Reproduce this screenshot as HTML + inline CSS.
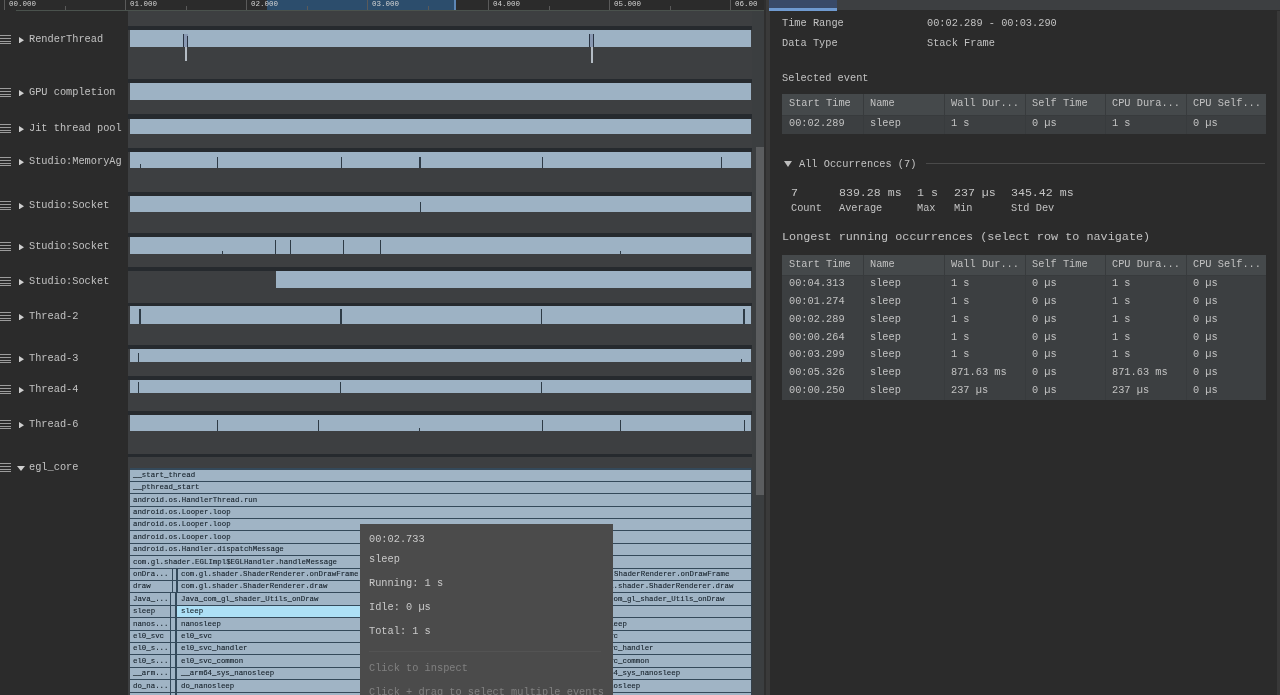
<!DOCTYPE html>
<html><head><meta charset="utf-8"><style>
html,body{margin:0;padding:0;width:1280px;height:695px;overflow:hidden;background:#2b2b2b}
#r{position:relative;width:1280px;height:695px;overflow:hidden}
#r div,#r svg{position:absolute}
.t{white-space:pre;will-change:transform;font-family:"Liberation Mono",monospace}
</style></head><body><div id="r">
<div style="left:0px;top:0px;width:1280px;height:695px;background:#2b2b2b;"></div>
<div style="left:128px;top:11px;width:624px;height:684px;background:#3d3f41;"></div>
<div style="left:752px;top:11px;width:12px;height:684px;background:#3b3e40;"></div>
<div style="left:756px;top:147px;width:8px;height:348px;background:#5b5d5f;"></div>
<div style="left:764px;top:0px;width:2px;height:695px;background:#2f2f2f;"></div>
<div style="left:766px;top:0px;width:4px;height:695px;background:#3a3a3a;"></div>
<div style="left:0px;top:0px;width:764px;height:10px;background:#2b2b2b;"></div>
<div style="left:267px;top:0px;width:188px;height:10px;background:#2c4d6c;"></div>
<div style="left:454px;top:0px;width:2px;height:10px;background:#5d86b5;"></div>
<div style="left:16px;top:10px;width:748px;height:1px;background:#4a524d;"></div>
<div style="left:4.3px;top:0px;width:1px;height:10px;background:#5a5a5a;"></div>
<div style="left:65px;top:6px;width:1px;height:4px;background:#5a5a5a;"></div>
<div style="left:125.3px;top:0px;width:1px;height:10px;background:#5a5a5a;"></div>
<div style="left:186px;top:6px;width:1px;height:4px;background:#5a5a5a;"></div>
<div style="left:246.3px;top:0px;width:1px;height:10px;background:#5a5a5a;"></div>
<div style="left:307px;top:6px;width:1px;height:4px;background:#5a5a5a;"></div>
<div style="left:367.3px;top:0px;width:1px;height:10px;background:#5a5a5a;"></div>
<div style="left:428px;top:6px;width:1px;height:4px;background:#5a5a5a;"></div>
<div style="left:488.3px;top:0px;width:1px;height:10px;background:#5a5a5a;"></div>
<div style="left:549px;top:6px;width:1px;height:4px;background:#5a5a5a;"></div>
<div style="left:609.3px;top:0px;width:1px;height:10px;background:#5a5a5a;"></div>
<div style="left:670px;top:6px;width:1px;height:4px;background:#5a5a5a;"></div>
<div style="left:730.3px;top:0px;width:1px;height:10px;background:#5a5a5a;"></div>
<div class="t" style="left:8.8px;top:0.96px;font-size:7.5px;line-height:7.5px;color:#d2d2d2;">00.000</div>
<div class="t" style="left:129.8px;top:0.96px;font-size:7.5px;line-height:7.5px;color:#d2d2d2;">01.000</div>
<div class="t" style="left:250.8px;top:0.96px;font-size:7.5px;line-height:7.5px;color:#d2d2d2;">02.000</div>
<div class="t" style="left:371.8px;top:0.96px;font-size:7.5px;line-height:7.5px;color:#d2d2d2;">03.000</div>
<div class="t" style="left:492.8px;top:0.96px;font-size:7.5px;line-height:7.5px;color:#d2d2d2;">04.000</div>
<div class="t" style="left:613.8px;top:0.96px;font-size:7.5px;line-height:7.5px;color:#d2d2d2;">05.000</div>
<div style="left:0;top:0;width:757px;height:10px;overflow:hidden">
<div class="t" style="left:734.8px;top:0.96px;font-size:7.5px;line-height:7.5px;color:#d2d2d2;">06.000</div>
</div>
<div style="left:128px;top:26px;width:624px;height:4px;background:#262a2e;"></div>
<div style="left:130px;top:30px;width:621px;height:17px;background:#9db2c4;"></div>
<div style="left:0px;top:35.3px;width:11px;height:1px;background:#9c9c9c;"></div>
<div style="left:0px;top:38.3px;width:11px;height:1px;background:#9c9c9c;"></div>
<div style="left:0px;top:41.3px;width:11px;height:1px;background:#9c9c9c;"></div>
<div style="left:0px;top:43.3px;width:11px;height:1px;background:#9c9c9c;"></div>
<svg style="left:19.2px;top:37.0px" width="5" height="6.4" viewBox="0 0 5 6.4"><path d="M0 0L5 3.2L0 6.4Z" fill="#cfcfcf"/></svg>
<div class="t" style="left:29px;top:34.11px;font-size:10.3px;line-height:10.3px;color:#c2c2c2;">RenderThread</div>
<div style="left:128px;top:79px;width:624px;height:4px;background:#262a2e;"></div>
<div style="left:130px;top:83px;width:621px;height:17px;background:#9db2c4;"></div>
<div style="left:0px;top:88.3px;width:11px;height:1px;background:#9c9c9c;"></div>
<div style="left:0px;top:91.3px;width:11px;height:1px;background:#9c9c9c;"></div>
<div style="left:0px;top:94.3px;width:11px;height:1px;background:#9c9c9c;"></div>
<div style="left:0px;top:96.3px;width:11px;height:1px;background:#9c9c9c;"></div>
<svg style="left:19.2px;top:90.0px" width="5" height="6.4" viewBox="0 0 5 6.4"><path d="M0 0L5 3.2L0 6.4Z" fill="#cfcfcf"/></svg>
<div class="t" style="left:29px;top:87.11px;font-size:10.3px;line-height:10.3px;color:#c2c2c2;">GPU completion</div>
<div style="left:128px;top:114px;width:624px;height:5px;background:#262a2e;"></div>
<div style="left:130px;top:119px;width:621px;height:15px;background:#9db2c4;"></div>
<div style="left:0px;top:124.3px;width:11px;height:1px;background:#9c9c9c;"></div>
<div style="left:0px;top:127.3px;width:11px;height:1px;background:#9c9c9c;"></div>
<div style="left:0px;top:130.3px;width:11px;height:1px;background:#9c9c9c;"></div>
<div style="left:0px;top:132.3px;width:11px;height:1px;background:#9c9c9c;"></div>
<svg style="left:19.2px;top:126.0px" width="5" height="6.4" viewBox="0 0 5 6.4"><path d="M0 0L5 3.2L0 6.4Z" fill="#cfcfcf"/></svg>
<div class="t" style="left:29px;top:123.11px;font-size:10.3px;line-height:10.3px;color:#c2c2c2;">Jit thread pool</div>
<div style="left:128px;top:148px;width:624px;height:4px;background:#262a2e;"></div>
<div style="left:130px;top:152px;width:621px;height:16px;background:#9db2c4;"></div>
<div style="left:0px;top:157.3px;width:11px;height:1px;background:#9c9c9c;"></div>
<div style="left:0px;top:160.3px;width:11px;height:1px;background:#9c9c9c;"></div>
<div style="left:0px;top:163.3px;width:11px;height:1px;background:#9c9c9c;"></div>
<div style="left:0px;top:165.3px;width:11px;height:1px;background:#9c9c9c;"></div>
<svg style="left:19.2px;top:159.0px" width="5" height="6.4" viewBox="0 0 5 6.4"><path d="M0 0L5 3.2L0 6.4Z" fill="#cfcfcf"/></svg>
<div class="t" style="left:29px;top:156.11px;font-size:10.3px;line-height:10.3px;color:#c2c2c2;">Studio:MemoryAg</div>
<div style="left:128px;top:192px;width:624px;height:4px;background:#262a2e;"></div>
<div style="left:130px;top:196px;width:621px;height:16px;background:#9db2c4;"></div>
<div style="left:0px;top:201.3px;width:11px;height:1px;background:#9c9c9c;"></div>
<div style="left:0px;top:204.3px;width:11px;height:1px;background:#9c9c9c;"></div>
<div style="left:0px;top:207.3px;width:11px;height:1px;background:#9c9c9c;"></div>
<div style="left:0px;top:209.3px;width:11px;height:1px;background:#9c9c9c;"></div>
<svg style="left:19.2px;top:203.0px" width="5" height="6.4" viewBox="0 0 5 6.4"><path d="M0 0L5 3.2L0 6.4Z" fill="#cfcfcf"/></svg>
<div class="t" style="left:29px;top:200.11px;font-size:10.3px;line-height:10.3px;color:#c2c2c2;">Studio:Socket</div>
<div style="left:128px;top:233px;width:624px;height:4px;background:#262a2e;"></div>
<div style="left:130px;top:237px;width:621px;height:17px;background:#9db2c4;"></div>
<div style="left:0px;top:242.3px;width:11px;height:1px;background:#9c9c9c;"></div>
<div style="left:0px;top:245.3px;width:11px;height:1px;background:#9c9c9c;"></div>
<div style="left:0px;top:248.3px;width:11px;height:1px;background:#9c9c9c;"></div>
<div style="left:0px;top:250.3px;width:11px;height:1px;background:#9c9c9c;"></div>
<svg style="left:19.2px;top:244.0px" width="5" height="6.4" viewBox="0 0 5 6.4"><path d="M0 0L5 3.2L0 6.4Z" fill="#cfcfcf"/></svg>
<div class="t" style="left:29px;top:241.11px;font-size:10.3px;line-height:10.3px;color:#c2c2c2;">Studio:Socket</div>
<div style="left:128px;top:267px;width:624px;height:4px;background:#262a2e;"></div>
<div style="left:276px;top:271px;width:475px;height:17px;background:#9db2c4;"></div>
<div style="left:0px;top:277.3px;width:11px;height:1px;background:#9c9c9c;"></div>
<div style="left:0px;top:280.3px;width:11px;height:1px;background:#9c9c9c;"></div>
<div style="left:0px;top:283.3px;width:11px;height:1px;background:#9c9c9c;"></div>
<div style="left:0px;top:285.3px;width:11px;height:1px;background:#9c9c9c;"></div>
<svg style="left:19.2px;top:279.0px" width="5" height="6.4" viewBox="0 0 5 6.4"><path d="M0 0L5 3.2L0 6.4Z" fill="#cfcfcf"/></svg>
<div class="t" style="left:29px;top:276.11px;font-size:10.3px;line-height:10.3px;color:#c2c2c2;">Studio:Socket</div>
<div style="left:128px;top:303px;width:624px;height:3px;background:#262a2e;"></div>
<div style="left:130px;top:306px;width:621px;height:18px;background:#9db2c4;"></div>
<div style="left:0px;top:312.3px;width:11px;height:1px;background:#9c9c9c;"></div>
<div style="left:0px;top:315.3px;width:11px;height:1px;background:#9c9c9c;"></div>
<div style="left:0px;top:318.3px;width:11px;height:1px;background:#9c9c9c;"></div>
<div style="left:0px;top:320.3px;width:11px;height:1px;background:#9c9c9c;"></div>
<svg style="left:19.2px;top:314.0px" width="5" height="6.4" viewBox="0 0 5 6.4"><path d="M0 0L5 3.2L0 6.4Z" fill="#cfcfcf"/></svg>
<div class="t" style="left:29px;top:311.11px;font-size:10.3px;line-height:10.3px;color:#c2c2c2;">Thread-2</div>
<div style="left:128px;top:345px;width:624px;height:4px;background:#262a2e;"></div>
<div style="left:130px;top:349px;width:621px;height:13px;background:#9db2c4;"></div>
<div style="left:0px;top:354.3px;width:11px;height:1px;background:#9c9c9c;"></div>
<div style="left:0px;top:357.3px;width:11px;height:1px;background:#9c9c9c;"></div>
<div style="left:0px;top:360.3px;width:11px;height:1px;background:#9c9c9c;"></div>
<div style="left:0px;top:362.3px;width:11px;height:1px;background:#9c9c9c;"></div>
<svg style="left:19.2px;top:356.0px" width="5" height="6.4" viewBox="0 0 5 6.4"><path d="M0 0L5 3.2L0 6.4Z" fill="#cfcfcf"/></svg>
<div class="t" style="left:29px;top:353.11px;font-size:10.3px;line-height:10.3px;color:#c2c2c2;">Thread-3</div>
<div style="left:128px;top:376px;width:624px;height:4px;background:#262a2e;"></div>
<div style="left:130px;top:380px;width:621px;height:13px;background:#9db2c4;"></div>
<div style="left:0px;top:385.3px;width:11px;height:1px;background:#9c9c9c;"></div>
<div style="left:0px;top:388.3px;width:11px;height:1px;background:#9c9c9c;"></div>
<div style="left:0px;top:391.3px;width:11px;height:1px;background:#9c9c9c;"></div>
<div style="left:0px;top:393.3px;width:11px;height:1px;background:#9c9c9c;"></div>
<svg style="left:19.2px;top:387.0px" width="5" height="6.4" viewBox="0 0 5 6.4"><path d="M0 0L5 3.2L0 6.4Z" fill="#cfcfcf"/></svg>
<div class="t" style="left:29px;top:384.11px;font-size:10.3px;line-height:10.3px;color:#c2c2c2;">Thread-4</div>
<div style="left:128px;top:411px;width:624px;height:4px;background:#262a2e;"></div>
<div style="left:130px;top:415px;width:621px;height:16px;background:#9db2c4;"></div>
<div style="left:0px;top:420.3px;width:11px;height:1px;background:#9c9c9c;"></div>
<div style="left:0px;top:423.3px;width:11px;height:1px;background:#9c9c9c;"></div>
<div style="left:0px;top:426.3px;width:11px;height:1px;background:#9c9c9c;"></div>
<div style="left:0px;top:428.3px;width:11px;height:1px;background:#9c9c9c;"></div>
<svg style="left:19.2px;top:422.0px" width="5" height="6.4" viewBox="0 0 5 6.4"><path d="M0 0L5 3.2L0 6.4Z" fill="#cfcfcf"/></svg>
<div class="t" style="left:29px;top:419.11px;font-size:10.3px;line-height:10.3px;color:#c2c2c2;">Thread-6</div>
<div style="left:128px;top:454px;width:624px;height:3px;background:#262a2e;"></div>
<div style="left:0px;top:463.3px;width:11px;height:1px;background:#9c9c9c;"></div>
<div style="left:0px;top:466.3px;width:11px;height:1px;background:#9c9c9c;"></div>
<div style="left:0px;top:469.3px;width:11px;height:1px;background:#9c9c9c;"></div>
<div style="left:0px;top:471.3px;width:11px;height:1px;background:#9c9c9c;"></div>
<svg style="left:17px;top:466.4px" width="8" height="6" viewBox="0 0 8 6"><path d="M0 0L8 0L4 5Z" fill="#cfcfcf"/></svg>
<div class="t" style="left:29px;top:462.11px;font-size:10.3px;line-height:10.3px;color:#c2c2c2;">egl_core</div>
<div style="left:140px;top:164px;width:1px;height:4px;background:#2e3b46;"></div>
<div style="left:216.5px;top:157px;width:1px;height:11px;background:#2e3b46;"></div>
<div style="left:341px;top:157px;width:1px;height:11px;background:#2e3b46;"></div>
<div style="left:418.5px;top:157px;width:2px;height:11px;background:#2e3b46;"></div>
<div style="left:541.5px;top:157px;width:1px;height:11px;background:#2e3b46;"></div>
<div style="left:721px;top:157px;width:1px;height:11px;background:#2e3b46;"></div>
<div style="left:420px;top:202px;width:1px;height:10px;background:#2e3b46;"></div>
<div style="left:221.5px;top:251px;width:1px;height:3px;background:#2e3b46;"></div>
<div style="left:275px;top:240px;width:1px;height:14px;background:#2e3b46;"></div>
<div style="left:289.5px;top:240px;width:1px;height:14px;background:#2e3b46;"></div>
<div style="left:342.5px;top:240px;width:1px;height:14px;background:#2e3b46;"></div>
<div style="left:380px;top:240px;width:1px;height:14px;background:#2e3b46;"></div>
<div style="left:620px;top:251px;width:1px;height:3px;background:#2e3b46;"></div>
<div style="left:138.5px;top:309px;width:2px;height:15px;background:#2e3b46;"></div>
<div style="left:340px;top:309px;width:2px;height:15px;background:#2e3b46;"></div>
<div style="left:541px;top:309px;width:1px;height:15px;background:#2e3b46;"></div>
<div style="left:743px;top:309px;width:2px;height:15px;background:#2e3b46;"></div>
<div style="left:138px;top:353px;width:1px;height:9px;background:#2e3b46;"></div>
<div style="left:741px;top:359px;width:1px;height:3px;background:#2e3b46;"></div>
<div style="left:138.2px;top:382px;width:1px;height:11px;background:#2e3b46;"></div>
<div style="left:340px;top:382px;width:1px;height:11px;background:#2e3b46;"></div>
<div style="left:540.5px;top:382px;width:1px;height:11px;background:#2e3b46;"></div>
<div style="left:216.5px;top:420px;width:1px;height:11px;background:#2e3b46;"></div>
<div style="left:318px;top:420px;width:1px;height:11px;background:#2e3b46;"></div>
<div style="left:419px;top:428px;width:1px;height:3px;background:#2e3b46;"></div>
<div style="left:541.5px;top:420px;width:1px;height:11px;background:#2e3b46;"></div>
<div style="left:619.5px;top:420px;width:1px;height:11px;background:#2e3b46;"></div>
<div style="left:744px;top:420px;width:1px;height:11px;background:#2e3b46;"></div>
<div style="left:183px;top:34px;width:4.5px;height:13px;background:#8898b2;"></div>
<div style="left:183px;top:34px;width:1px;height:13px;background:#2a3444;"></div>
<div style="left:186.5px;top:36px;width:1px;height:11px;background:#2a3444;"></div>
<div style="left:184.5px;top:47px;width:2px;height:14px;background:#b4bcc4;"></div>
<div style="left:589px;top:34px;width:5px;height:13px;background:#8898b2;"></div>
<div style="left:589px;top:34px;width:1px;height:13px;background:#2a3444;"></div>
<div style="left:593px;top:34px;width:1px;height:13px;background:#2a3444;"></div>
<div style="left:590.5px;top:47px;width:2px;height:16px;background:#b4bcc4;"></div>
<div style="left:130px;top:469.0px;width:621px;height:226.0px;background:#a0b4c5;"></div>
<div style="left:130px;top:468px;width:621px;height:2px;background:#34495a;"></div>
<div style="left:751px;top:468px;width:1px;height:227px;background:#34404a;"></div>
<div style="left:130px;top:468.40px;width:621px;height:1px;background:#34495a;"></div>
<div style="left:130px;top:480.80px;width:621px;height:1px;background:#34495a;"></div>
<div style="left:130px;top:493.20px;width:621px;height:1px;background:#34495a;"></div>
<div style="left:130px;top:505.60px;width:621px;height:1px;background:#34495a;"></div>
<div style="left:130px;top:518.00px;width:621px;height:1px;background:#34495a;"></div>
<div style="left:130px;top:530.40px;width:621px;height:1px;background:#34495a;"></div>
<div style="left:130px;top:542.80px;width:621px;height:1px;background:#34495a;"></div>
<div style="left:130px;top:555.20px;width:621px;height:1px;background:#34495a;"></div>
<div style="left:130px;top:567.60px;width:621px;height:1px;background:#34495a;"></div>
<div style="left:130px;top:580.00px;width:621px;height:1px;background:#34495a;"></div>
<div style="left:130px;top:592.40px;width:621px;height:1px;background:#34495a;"></div>
<div style="left:130px;top:604.80px;width:621px;height:1px;background:#34495a;"></div>
<div style="left:130px;top:617.20px;width:621px;height:1px;background:#34495a;"></div>
<div style="left:130px;top:629.60px;width:621px;height:1px;background:#34495a;"></div>
<div style="left:130px;top:642.00px;width:621px;height:1px;background:#34495a;"></div>
<div style="left:130px;top:654.40px;width:621px;height:1px;background:#34495a;"></div>
<div style="left:130px;top:666.80px;width:621px;height:1px;background:#34495a;"></div>
<div style="left:130px;top:679.20px;width:621px;height:1px;background:#34495a;"></div>
<div style="left:130px;top:691.60px;width:621px;height:1px;background:#34495a;"></div>
<div class="t" style="left:132.5px;top:471.83px;font-size:7.4px;line-height:7.4px;color:#131e27;-webkit-text-stroke:0.1px #131e27;">__start_thread</div>
<div class="t" style="left:132.5px;top:484.23px;font-size:7.4px;line-height:7.4px;color:#131e27;-webkit-text-stroke:0.1px #131e27;">__pthread_start</div>
<div class="t" style="left:132.5px;top:496.63px;font-size:7.4px;line-height:7.4px;color:#131e27;-webkit-text-stroke:0.1px #131e27;">android.os.HandlerThread.run</div>
<div class="t" style="left:132.5px;top:509.03px;font-size:7.4px;line-height:7.4px;color:#131e27;-webkit-text-stroke:0.1px #131e27;">android.os.Looper.loop</div>
<div class="t" style="left:132.5px;top:521.43px;font-size:7.4px;line-height:7.4px;color:#131e27;-webkit-text-stroke:0.1px #131e27;">android.os.Looper.loop</div>
<div class="t" style="left:132.5px;top:533.83px;font-size:7.4px;line-height:7.4px;color:#131e27;-webkit-text-stroke:0.1px #131e27;">android.os.Looper.loop</div>
<div class="t" style="left:132.5px;top:546.23px;font-size:7.4px;line-height:7.4px;color:#131e27;-webkit-text-stroke:0.1px #131e27;">android.os.Handler.dispatchMessage</div>
<div class="t" style="left:132.5px;top:558.63px;font-size:7.4px;line-height:7.4px;color:#131e27;-webkit-text-stroke:0.1px #131e27;">com.gl.shader.EGLImpl$EGLHandler.handleMessage</div>
<div style="left:172px;top:568.20px;width:1px;height:12.4px;background:#34495a;"></div>
<div style="left:176px;top:568.20px;width:1.5px;height:12.4px;background:#34495a;"></div>
<div class="t" style="left:132.5px;top:571.03px;font-size:7.4px;line-height:7.4px;color:#131e27;-webkit-text-stroke:0.1px #131e27;">onDra...</div>
<div class="t" style="left:181px;top:571.03px;font-size:7.4px;line-height:7.4px;color:#131e27;-webkit-text-stroke:0.1px #131e27;">com.gl.shader.ShaderRenderer.onDrawFrame</div>
<div class="t" style="left:552px;top:571.03px;font-size:7.4px;line-height:7.4px;color:#131e27;-webkit-text-stroke:0.1px #131e27;">com.gl.shader.ShaderRenderer.onDrawFrame</div>
<div style="left:172px;top:580.60px;width:1px;height:12.4px;background:#34495a;"></div>
<div style="left:176px;top:580.60px;width:1.5px;height:12.4px;background:#34495a;"></div>
<div class="t" style="left:132.5px;top:583.43px;font-size:7.4px;line-height:7.4px;color:#131e27;-webkit-text-stroke:0.1px #131e27;">draw</div>
<div class="t" style="left:181px;top:583.43px;font-size:7.4px;line-height:7.4px;color:#131e27;-webkit-text-stroke:0.1px #131e27;">com.gl.shader.ShaderRenderer.draw</div>
<div class="t" style="left:587px;top:583.43px;font-size:7.4px;line-height:7.4px;color:#131e27;-webkit-text-stroke:0.1px #131e27;">com.gl.shader.ShaderRenderer.draw</div>
<div style="left:170px;top:593.00px;width:1px;height:12.4px;background:#34495a;"></div>
<div style="left:175px;top:593.00px;width:2px;height:12.4px;background:#34495a;"></div>
<div class="t" style="left:132.5px;top:595.83px;font-size:7.4px;line-height:7.4px;color:#131e27;-webkit-text-stroke:0.1px #131e27;">Java_...</div>
<div class="t" style="left:181px;top:595.83px;font-size:7.4px;line-height:7.4px;color:#131e27;-webkit-text-stroke:0.1px #131e27;">Java_com_gl_shader_Utils_onDraw</div>
<div class="t" style="left:587px;top:595.83px;font-size:7.4px;line-height:7.4px;color:#131e27;-webkit-text-stroke:0.1px #131e27;">Java_com_gl_shader_Utils_onDraw</div>
<div style="left:170px;top:605.40px;width:1px;height:12.4px;background:#34495a;"></div>
<div style="left:175px;top:605.40px;width:2px;height:12.4px;background:#34495a;"></div>
<div class="t" style="left:132.5px;top:608.23px;font-size:7.4px;line-height:7.4px;color:#131e27;-webkit-text-stroke:0.1px #131e27;">sleep</div>
<div style="left:177px;top:605.90px;width:420px;height:11.4px;background:#ade0f6;"></div>
<div class="t" style="left:181px;top:608.23px;font-size:7.4px;line-height:7.4px;color:#131e27;-webkit-text-stroke:0.1px #131e27;">sleep</div>
<div style="left:170px;top:617.80px;width:1px;height:12.4px;background:#34495a;"></div>
<div style="left:175px;top:617.80px;width:2px;height:12.4px;background:#34495a;"></div>
<div class="t" style="left:132.5px;top:620.63px;font-size:7.4px;line-height:7.4px;color:#131e27;-webkit-text-stroke:0.1px #131e27;">nanos...</div>
<div class="t" style="left:181px;top:620.63px;font-size:7.4px;line-height:7.4px;color:#131e27;-webkit-text-stroke:0.1px #131e27;">nanosleep</div>
<div class="t" style="left:587px;top:620.63px;font-size:7.4px;line-height:7.4px;color:#131e27;-webkit-text-stroke:0.1px #131e27;">nanosleep</div>
<div style="left:170px;top:630.20px;width:1px;height:12.4px;background:#34495a;"></div>
<div style="left:175px;top:630.20px;width:2px;height:12.4px;background:#34495a;"></div>
<div class="t" style="left:132.5px;top:633.03px;font-size:7.4px;line-height:7.4px;color:#131e27;-webkit-text-stroke:0.1px #131e27;">el0_svc</div>
<div class="t" style="left:181px;top:633.03px;font-size:7.4px;line-height:7.4px;color:#131e27;-webkit-text-stroke:0.1px #131e27;">el0_svc</div>
<div class="t" style="left:587px;top:633.03px;font-size:7.4px;line-height:7.4px;color:#131e27;-webkit-text-stroke:0.1px #131e27;">el0_svc</div>
<div style="left:170px;top:642.60px;width:1px;height:12.4px;background:#34495a;"></div>
<div style="left:175px;top:642.60px;width:2px;height:12.4px;background:#34495a;"></div>
<div class="t" style="left:132.5px;top:645.43px;font-size:7.4px;line-height:7.4px;color:#131e27;-webkit-text-stroke:0.1px #131e27;">el0_s...</div>
<div class="t" style="left:181px;top:645.43px;font-size:7.4px;line-height:7.4px;color:#131e27;-webkit-text-stroke:0.1px #131e27;">el0_svc_handler</div>
<div class="t" style="left:587px;top:645.43px;font-size:7.4px;line-height:7.4px;color:#131e27;-webkit-text-stroke:0.1px #131e27;">el0_svc_handler</div>
<div style="left:170px;top:655.00px;width:1px;height:12.4px;background:#34495a;"></div>
<div style="left:175px;top:655.00px;width:2px;height:12.4px;background:#34495a;"></div>
<div class="t" style="left:132.5px;top:657.83px;font-size:7.4px;line-height:7.4px;color:#131e27;-webkit-text-stroke:0.1px #131e27;">el0_s...</div>
<div class="t" style="left:181px;top:657.83px;font-size:7.4px;line-height:7.4px;color:#131e27;-webkit-text-stroke:0.1px #131e27;">el0_svc_common</div>
<div class="t" style="left:587px;top:657.83px;font-size:7.4px;line-height:7.4px;color:#131e27;-webkit-text-stroke:0.1px #131e27;">el0_svc_common</div>
<div style="left:170px;top:667.40px;width:1px;height:12.4px;background:#34495a;"></div>
<div style="left:175px;top:667.40px;width:2px;height:12.4px;background:#34495a;"></div>
<div class="t" style="left:132.5px;top:670.23px;font-size:7.4px;line-height:7.4px;color:#131e27;-webkit-text-stroke:0.1px #131e27;">__arm...</div>
<div class="t" style="left:181px;top:670.23px;font-size:7.4px;line-height:7.4px;color:#131e27;-webkit-text-stroke:0.1px #131e27;">__arm64_sys_nanosleep</div>
<div class="t" style="left:587px;top:670.23px;font-size:7.4px;line-height:7.4px;color:#131e27;-webkit-text-stroke:0.1px #131e27;">__arm64_sys_nanosleep</div>
<div style="left:170px;top:679.80px;width:1px;height:12.4px;background:#34495a;"></div>
<div style="left:175px;top:679.80px;width:2px;height:12.4px;background:#34495a;"></div>
<div class="t" style="left:132.5px;top:682.63px;font-size:7.4px;line-height:7.4px;color:#131e27;-webkit-text-stroke:0.1px #131e27;">do_na...</div>
<div class="t" style="left:181px;top:682.63px;font-size:7.4px;line-height:7.4px;color:#131e27;-webkit-text-stroke:0.1px #131e27;">do_nanosleep</div>
<div class="t" style="left:587px;top:682.63px;font-size:7.4px;line-height:7.4px;color:#131e27;-webkit-text-stroke:0.1px #131e27;">do_nanosleep</div>
<div style="left:170px;top:692.20px;width:1px;height:12.4px;background:#34495a;"></div>
<div style="left:175px;top:692.20px;width:2px;height:12.4px;background:#34495a;"></div>
<div style="left:360px;top:524px;width:253px;height:172px;background:#4b4b4b;"></div>
<div class="t" style="left:368.8px;top:534.11px;font-size:10.3px;line-height:10.3px;color:#c9c9c9;">00:02.733</div>
<div class="t" style="left:368.8px;top:554.11px;font-size:10.3px;line-height:10.3px;color:#c9c9c9;">sleep</div>
<div class="t" style="left:368.8px;top:578.11px;font-size:10.3px;line-height:10.3px;color:#c9c9c9;">Running: 1 s</div>
<div class="t" style="left:368.8px;top:602.11px;font-size:10.3px;line-height:10.3px;color:#c9c9c9;">Idle: 0 µs</div>
<div class="t" style="left:368.8px;top:626.11px;font-size:10.3px;line-height:10.3px;color:#c9c9c9;">Total: 1 s</div>
<div style="left:369px;top:651px;width:232px;height:1px;background:#535353;"></div>
<div class="t" style="left:368.8px;top:663.11px;font-size:10.3px;line-height:10.3px;color:#808080;">Click to inspect</div>
<div class="t" style="left:368.8px;top:686.61px;font-size:10.3px;line-height:10.3px;color:#808080;">Click + drag to select multiple events</div>
<div style="left:1277px;top:11px;width:3px;height:684px;background:#383838;"></div>
<div style="left:770px;top:0px;width:510px;height:10px;background:#3d3f41;"></div>
<div style="left:769px;top:0px;width:68px;height:8px;background:#394a68;"></div>
<div style="left:769px;top:8px;width:68px;height:3px;background:#6f9ad0;"></div>
<div class="t" style="left:781.5px;top:18.11px;font-size:10.3px;line-height:10.3px;color:#c2c2c2;">Time Range</div>
<div class="t" style="left:927px;top:18.11px;font-size:10.3px;line-height:10.3px;color:#c2c2c2;">00:02.289 - 00:03.290</div>
<div class="t" style="left:781.5px;top:38.41px;font-size:10.3px;line-height:10.3px;color:#c2c2c2;">Data Type</div>
<div class="t" style="left:927px;top:38.41px;font-size:10.3px;line-height:10.3px;color:#c2c2c2;">Stack Frame</div>
<div class="t" style="left:781.5px;top:73.11px;font-size:10.3px;line-height:10.3px;color:#c2c2c2;">Selected event</div>
<div style="left:782px;top:94px;width:484px;height:21px;background:#45494b;"></div>
<div style="left:782px;top:115px;width:484px;height:19px;background:#3c3f41;"></div>
<div style="left:862.85px;top:94px;width:1px;height:40px;background:#383b3d;"></div>
<div style="left:943.7px;top:94px;width:1px;height:40px;background:#383b3d;"></div>
<div style="left:1024.55px;top:94px;width:1px;height:40px;background:#383b3d;"></div>
<div style="left:1105.4px;top:94px;width:1px;height:40px;background:#383b3d;"></div>
<div style="left:1186.25px;top:94px;width:1px;height:40px;background:#383b3d;"></div>
<div style="left:782px;top:115px;width:484px;height:1px;background:#383b3d;"></div>
<div class="t" style="left:789.0px;top:98.11px;font-size:10.3px;line-height:10.3px;color:#c2c2c2;">Start Time</div>
<div class="t" style="left:869.85px;top:98.11px;font-size:10.3px;line-height:10.3px;color:#c2c2c2;">Name</div>
<div class="t" style="left:950.7px;top:98.11px;font-size:10.3px;line-height:10.3px;color:#c2c2c2;">Wall Dur...</div>
<div class="t" style="left:1031.55px;top:98.11px;font-size:10.3px;line-height:10.3px;color:#c2c2c2;">Self Time</div>
<div class="t" style="left:1112.4px;top:98.11px;font-size:10.3px;line-height:10.3px;color:#c2c2c2;">CPU Dura...</div>
<div class="t" style="left:1193.25px;top:98.11px;font-size:10.3px;line-height:10.3px;color:#c2c2c2;">CPU Self...</div>
<div class="t" style="left:789.0px;top:118.11px;font-size:10.3px;line-height:10.3px;color:#c2c2c2;">00:02.289</div>
<div class="t" style="left:869.85px;top:118.11px;font-size:10.3px;line-height:10.3px;color:#c2c2c2;">sleep</div>
<div class="t" style="left:950.7px;top:118.11px;font-size:10.3px;line-height:10.3px;color:#c2c2c2;">1 s</div>
<div class="t" style="left:1031.55px;top:118.11px;font-size:10.3px;line-height:10.3px;color:#c2c2c2;">0 µs</div>
<div class="t" style="left:1112.4px;top:118.11px;font-size:10.3px;line-height:10.3px;color:#c2c2c2;">1 s</div>
<div class="t" style="left:1193.25px;top:118.11px;font-size:10.3px;line-height:10.3px;color:#c2c2c2;">0 µs</div>
<svg style="left:784px;top:161px" width="8" height="6" viewBox="0 0 8 6"><path d="M0 0L8 0L4 6Z" fill="#bdbdbd"/></svg>
<div class="t" style="left:799px;top:159.11px;font-size:10.3px;line-height:10.3px;color:#c2c2c2;">All Occurrences (7)</div>
<div style="left:926px;top:163px;width:339px;height:1px;background:#4a4a4a;"></div>
<div class="t" style="left:791px;top:187.11px;font-size:11.6px;line-height:11.6px;color:#c3c3c3;">7</div>
<div class="t" style="left:791px;top:203.11px;font-size:10.3px;line-height:10.3px;color:#c2c2c2;">Count</div>
<div class="t" style="left:838.5px;top:187.11px;font-size:11.6px;line-height:11.6px;color:#c3c3c3;">839.28 ms</div>
<div class="t" style="left:838.5px;top:203.11px;font-size:10.3px;line-height:10.3px;color:#c2c2c2;">Average</div>
<div class="t" style="left:917px;top:187.11px;font-size:11.6px;line-height:11.6px;color:#c3c3c3;">1 s</div>
<div class="t" style="left:917px;top:203.11px;font-size:10.3px;line-height:10.3px;color:#c2c2c2;">Max</div>
<div class="t" style="left:953.5px;top:187.11px;font-size:11.6px;line-height:11.6px;color:#c3c3c3;">237 µs</div>
<div class="t" style="left:953.5px;top:203.11px;font-size:10.3px;line-height:10.3px;color:#c2c2c2;">Min</div>
<div class="t" style="left:1011px;top:187.11px;font-size:11.6px;line-height:11.6px;color:#c3c3c3;">345.42 ms</div>
<div class="t" style="left:1011px;top:203.11px;font-size:10.3px;line-height:10.3px;color:#c2c2c2;">Std Dev</div>
<div class="t" style="left:782px;top:231.96px;font-size:11.8px;line-height:11.8px;color:#c2c2c2;">Longest running occurrences (select row to navigate)</div>
<div style="left:782px;top:255px;width:484px;height:20px;background:#45494b;"></div>
<div style="left:782px;top:275px;width:484px;height:124.80999999999999px;background:#3c3f41;"></div>
<div style="left:862.85px;top:255px;width:1px;height:144.81px;background:#383b3d;"></div>
<div style="left:943.7px;top:255px;width:1px;height:144.81px;background:#383b3d;"></div>
<div style="left:1024.55px;top:255px;width:1px;height:144.81px;background:#383b3d;"></div>
<div style="left:1105.4px;top:255px;width:1px;height:144.81px;background:#383b3d;"></div>
<div style="left:1186.25px;top:255px;width:1px;height:144.81px;background:#383b3d;"></div>
<div style="left:782px;top:275px;width:484px;height:1px;background:#383b3d;"></div>
<div class="t" style="left:789.0px;top:259.11px;font-size:10.3px;line-height:10.3px;color:#c2c2c2;">Start Time</div>
<div class="t" style="left:869.85px;top:259.11px;font-size:10.3px;line-height:10.3px;color:#c2c2c2;">Name</div>
<div class="t" style="left:950.7px;top:259.11px;font-size:10.3px;line-height:10.3px;color:#c2c2c2;">Wall Dur...</div>
<div class="t" style="left:1031.55px;top:259.11px;font-size:10.3px;line-height:10.3px;color:#c2c2c2;">Self Time</div>
<div class="t" style="left:1112.4px;top:259.11px;font-size:10.3px;line-height:10.3px;color:#c2c2c2;">CPU Dura...</div>
<div class="t" style="left:1193.25px;top:259.11px;font-size:10.3px;line-height:10.3px;color:#c2c2c2;">CPU Self...</div>
<div class="t" style="left:789.0px;top:278.11px;font-size:10.3px;line-height:10.3px;color:#c2c2c2;">00:04.313</div>
<div class="t" style="left:869.85px;top:278.11px;font-size:10.3px;line-height:10.3px;color:#c2c2c2;">sleep</div>
<div class="t" style="left:950.7px;top:278.11px;font-size:10.3px;line-height:10.3px;color:#c2c2c2;">1 s</div>
<div class="t" style="left:1031.55px;top:278.11px;font-size:10.3px;line-height:10.3px;color:#c2c2c2;">0 µs</div>
<div class="t" style="left:1112.4px;top:278.11px;font-size:10.3px;line-height:10.3px;color:#c2c2c2;">1 s</div>
<div class="t" style="left:1193.25px;top:278.11px;font-size:10.3px;line-height:10.3px;color:#c2c2c2;">0 µs</div>
<div class="t" style="left:789.0px;top:295.94px;font-size:10.3px;line-height:10.3px;color:#c2c2c2;">00:01.274</div>
<div class="t" style="left:869.85px;top:295.94px;font-size:10.3px;line-height:10.3px;color:#c2c2c2;">sleep</div>
<div class="t" style="left:950.7px;top:295.94px;font-size:10.3px;line-height:10.3px;color:#c2c2c2;">1 s</div>
<div class="t" style="left:1031.55px;top:295.94px;font-size:10.3px;line-height:10.3px;color:#c2c2c2;">0 µs</div>
<div class="t" style="left:1112.4px;top:295.94px;font-size:10.3px;line-height:10.3px;color:#c2c2c2;">1 s</div>
<div class="t" style="left:1193.25px;top:295.94px;font-size:10.3px;line-height:10.3px;color:#c2c2c2;">0 µs</div>
<div class="t" style="left:789.0px;top:313.77px;font-size:10.3px;line-height:10.3px;color:#c2c2c2;">00:02.289</div>
<div class="t" style="left:869.85px;top:313.77px;font-size:10.3px;line-height:10.3px;color:#c2c2c2;">sleep</div>
<div class="t" style="left:950.7px;top:313.77px;font-size:10.3px;line-height:10.3px;color:#c2c2c2;">1 s</div>
<div class="t" style="left:1031.55px;top:313.77px;font-size:10.3px;line-height:10.3px;color:#c2c2c2;">0 µs</div>
<div class="t" style="left:1112.4px;top:313.77px;font-size:10.3px;line-height:10.3px;color:#c2c2c2;">1 s</div>
<div class="t" style="left:1193.25px;top:313.77px;font-size:10.3px;line-height:10.3px;color:#c2c2c2;">0 µs</div>
<div class="t" style="left:789.0px;top:331.60px;font-size:10.3px;line-height:10.3px;color:#c2c2c2;">00:00.264</div>
<div class="t" style="left:869.85px;top:331.60px;font-size:10.3px;line-height:10.3px;color:#c2c2c2;">sleep</div>
<div class="t" style="left:950.7px;top:331.60px;font-size:10.3px;line-height:10.3px;color:#c2c2c2;">1 s</div>
<div class="t" style="left:1031.55px;top:331.60px;font-size:10.3px;line-height:10.3px;color:#c2c2c2;">0 µs</div>
<div class="t" style="left:1112.4px;top:331.60px;font-size:10.3px;line-height:10.3px;color:#c2c2c2;">1 s</div>
<div class="t" style="left:1193.25px;top:331.60px;font-size:10.3px;line-height:10.3px;color:#c2c2c2;">0 µs</div>
<div class="t" style="left:789.0px;top:349.43px;font-size:10.3px;line-height:10.3px;color:#c2c2c2;">00:03.299</div>
<div class="t" style="left:869.85px;top:349.43px;font-size:10.3px;line-height:10.3px;color:#c2c2c2;">sleep</div>
<div class="t" style="left:950.7px;top:349.43px;font-size:10.3px;line-height:10.3px;color:#c2c2c2;">1 s</div>
<div class="t" style="left:1031.55px;top:349.43px;font-size:10.3px;line-height:10.3px;color:#c2c2c2;">0 µs</div>
<div class="t" style="left:1112.4px;top:349.43px;font-size:10.3px;line-height:10.3px;color:#c2c2c2;">1 s</div>
<div class="t" style="left:1193.25px;top:349.43px;font-size:10.3px;line-height:10.3px;color:#c2c2c2;">0 µs</div>
<div class="t" style="left:789.0px;top:367.26px;font-size:10.3px;line-height:10.3px;color:#c2c2c2;">00:05.326</div>
<div class="t" style="left:869.85px;top:367.26px;font-size:10.3px;line-height:10.3px;color:#c2c2c2;">sleep</div>
<div class="t" style="left:950.7px;top:367.26px;font-size:10.3px;line-height:10.3px;color:#c2c2c2;">871.63 ms</div>
<div class="t" style="left:1031.55px;top:367.26px;font-size:10.3px;line-height:10.3px;color:#c2c2c2;">0 µs</div>
<div class="t" style="left:1112.4px;top:367.26px;font-size:10.3px;line-height:10.3px;color:#c2c2c2;">871.63 ms</div>
<div class="t" style="left:1193.25px;top:367.26px;font-size:10.3px;line-height:10.3px;color:#c2c2c2;">0 µs</div>
<div class="t" style="left:789.0px;top:385.09px;font-size:10.3px;line-height:10.3px;color:#c2c2c2;">00:00.250</div>
<div class="t" style="left:869.85px;top:385.09px;font-size:10.3px;line-height:10.3px;color:#c2c2c2;">sleep</div>
<div class="t" style="left:950.7px;top:385.09px;font-size:10.3px;line-height:10.3px;color:#c2c2c2;">237 µs</div>
<div class="t" style="left:1031.55px;top:385.09px;font-size:10.3px;line-height:10.3px;color:#c2c2c2;">0 µs</div>
<div class="t" style="left:1112.4px;top:385.09px;font-size:10.3px;line-height:10.3px;color:#c2c2c2;">237 µs</div>
<div class="t" style="left:1193.25px;top:385.09px;font-size:10.3px;line-height:10.3px;color:#c2c2c2;">0 µs</div>
</div></body></html>
